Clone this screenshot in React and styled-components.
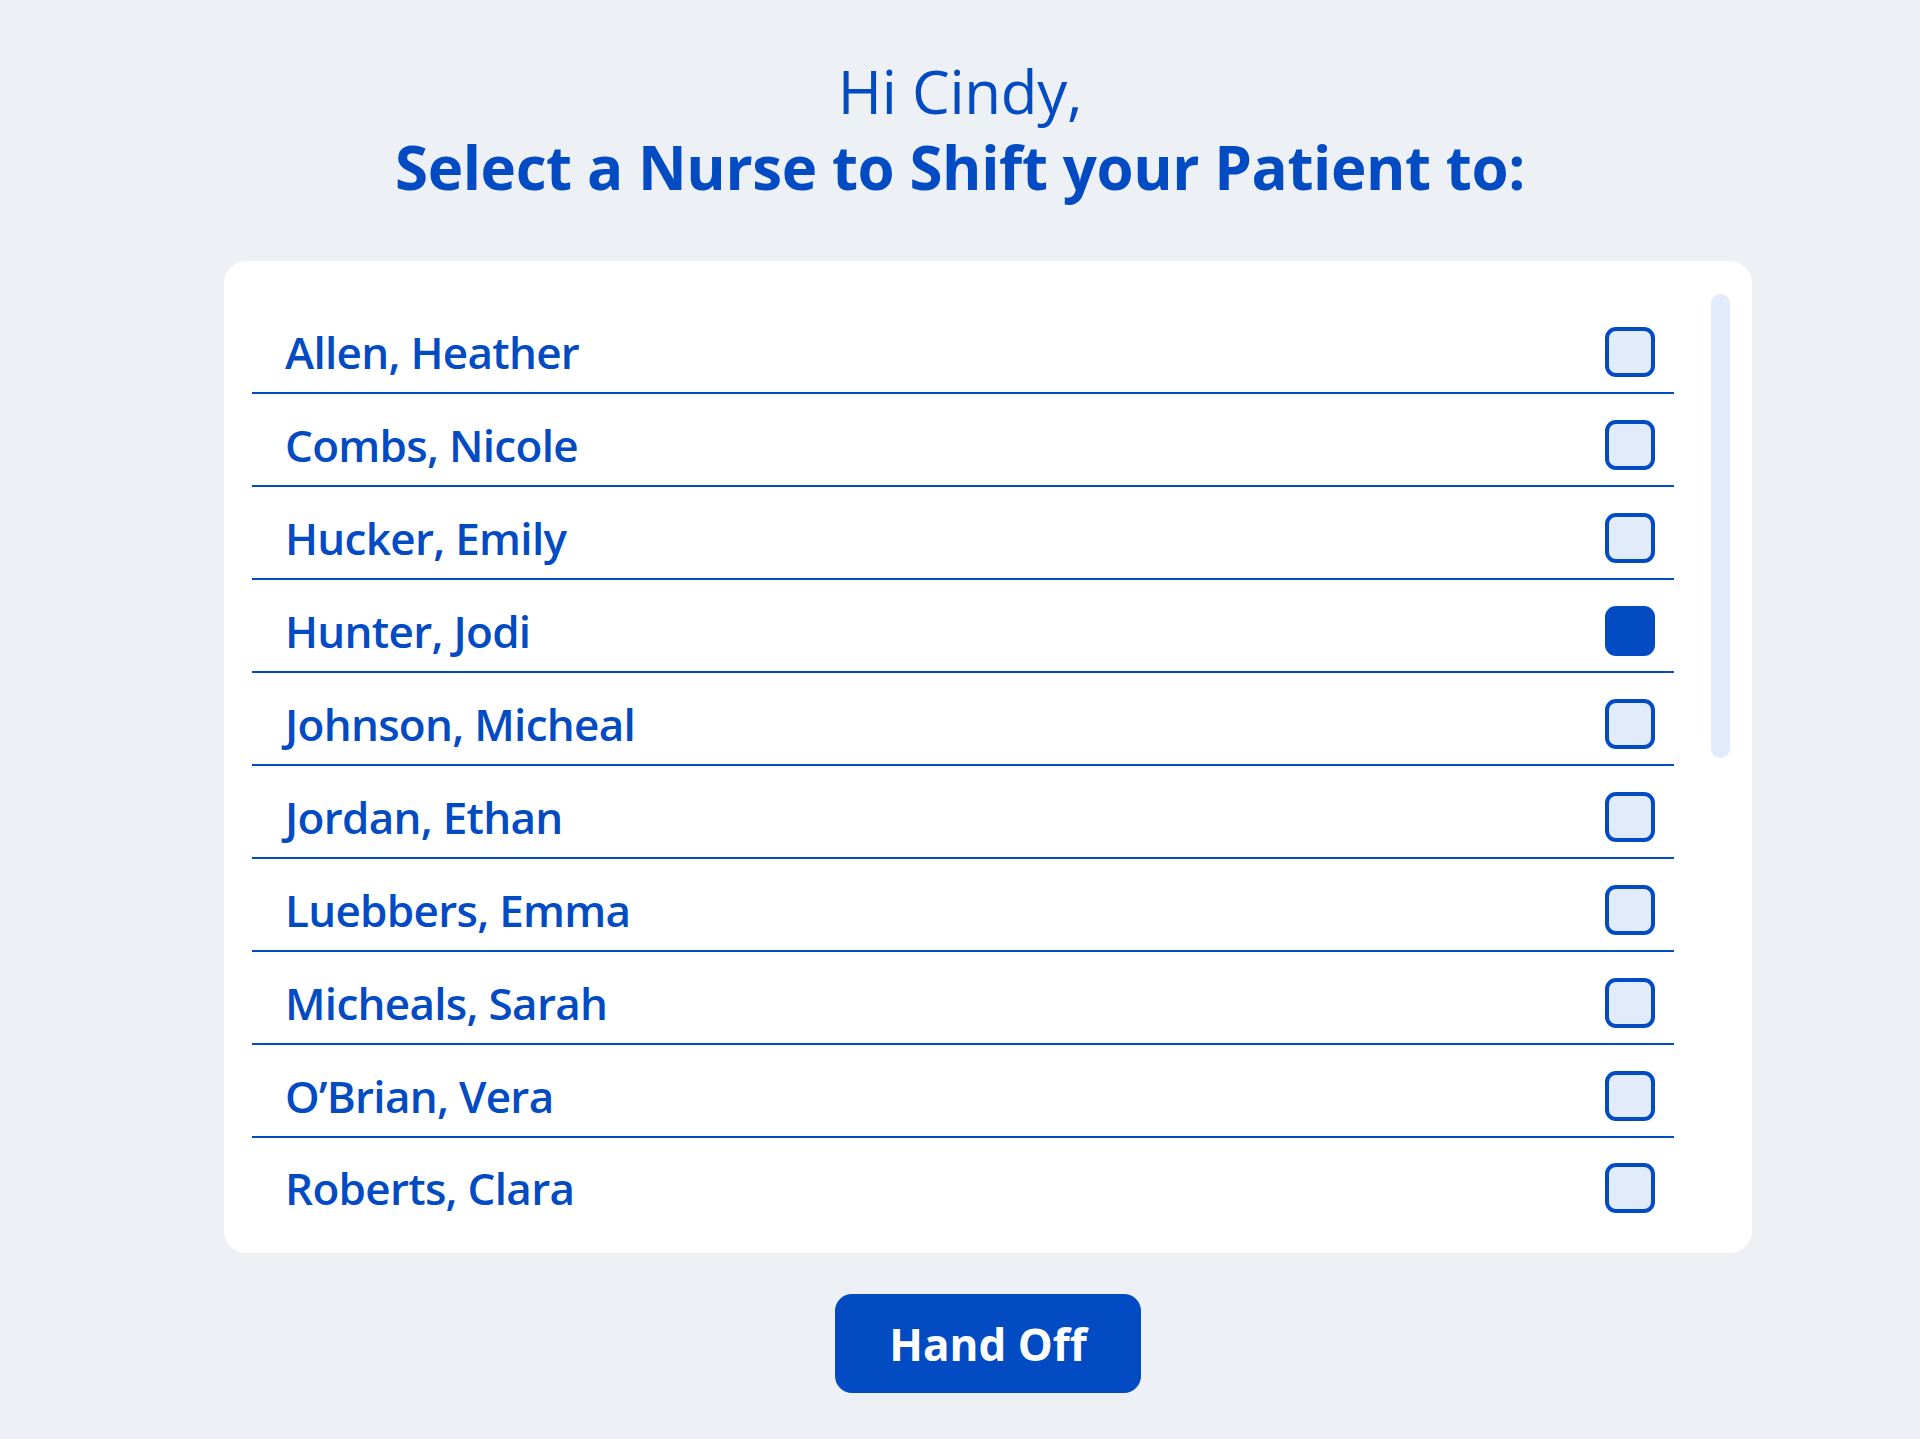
import React, { useState } from 'react';
import styled, { createGlobalStyle } from 'styled-components';

const GlobalStyle = createGlobalStyle`
  html, body {
    margin: 0;
    padding: 0;
    background: #edf0f5;
    font-family: "Open Sans", "Noto Sans", sans-serif;
  }
`;

const BLUE = '#034bc3';

const nurses = [
  'Allen, Heather',
  'Combs, Nicole',
  'Hucker, Emily',
  'Hunter, Jodi',
  'Johnson, Micheal',
  'Jordan, Ethan',
  'Luebbers, Emma',
  'Micheals, Sarah',
  'O’Brian, Vera',
  'Roberts, Clara',
];

const App = () => {
  const [selected, setSelected] = useState('Hunter, Jodi');

  return (
    <>
      <GlobalStyle />
      <Page>
        <Heading>
          <Greeting>Hi Cindy,</Greeting>
          <Title>Select a Nurse to Shift your Patient to:</Title>
        </Heading>

        <Panel>
          <Card>
            <List>
              {nurses.map((name) => (
                <Row key={name} onClick={() => setSelected(name)}>
                  <Name>{name}</Name>
                  <Checkbox checked={selected === name} />
                </Row>
              ))}
            </List>
            <ScrollTrack>
              <ScrollThumb />
            </ScrollTrack>
          </Card>
          <HandOffButton>Hand Off</HandOffButton>
        </Panel>
      </Page>
    </>
  );
};

const Page = styled.div`
  min-height: 1439px;
  display: flex;
  flex-direction: column;
  align-items: center;
  padding-top: 53px;
  box-sizing: border-box;
`;

const Heading = styled.h1`
  margin: 0;
  text-align: center;
  color: ${BLUE};
  font-size: 60px;
  line-height: 76px;
`;

const Greeting = styled.span`
  display: block;
  font-weight: 400;
  letter-spacing: -0.3px;
`;

const Title = styled.span`
  display: block;
  font-weight: 700;
  letter-spacing: -0.4px;
`;

const Panel = styled.div`
  width: 1528px;
  margin-left: 56px;
  margin-top: 56px;
  display: flex;
  flex-direction: column;
  align-items: center;
`;

const Card = styled.div`
  width: 100%;
  box-sizing: border-box;
  background: #ffffff;
  border-radius: 22px;
  padding: 33px 22px 22px 28px;
  display: flex;
  gap: 37px;
`;

const List = styled.ul`
  flex: 1;
  list-style: none;
  margin: 7px 0 0;
  padding: 0;
`;

const Row = styled.li`
  height: 93px;
  box-sizing: border-box;
  padding: 10px 19px 0 33px;
  display: flex;
  align-items: center;
  justify-content: space-between;
  border-bottom: 2px solid ${BLUE};
  cursor: pointer;

  &:last-child {
    border-bottom: none;
    padding-top: 6px;
  }
`;

const Name = styled.span`
  font-size: 44px;
  font-weight: 600;
  letter-spacing: -0.7px;
  color: ${BLUE};
`;

const Checkbox = styled.span`
  width: 50px;
  height: 50px;
  box-sizing: border-box;
  border-radius: 11px;
  border: 4px solid ${BLUE};
  background: ${(p) => (p.checked ? BLUE : '#e1ebfa')};
  flex-shrink: 0;
`;

const ScrollTrack = styled.div`
  width: 19px;
  flex-shrink: 0;
`;

const ScrollThumb = styled.div`
  height: 464px;
  border-radius: 10px;
  background: #e1ebfa;
`;

const HandOffButton = styled.button`
  margin-top: 41px;
  width: 306px;
  height: 99px;
  border: none;
  border-radius: 17px;
  background: ${BLUE};
  color: #ffffff;
  font-family: "Open Sans", "Noto Sans", sans-serif;
  font-size: 44px;
  font-weight: 700;
  cursor: pointer;
`;

export default App;
